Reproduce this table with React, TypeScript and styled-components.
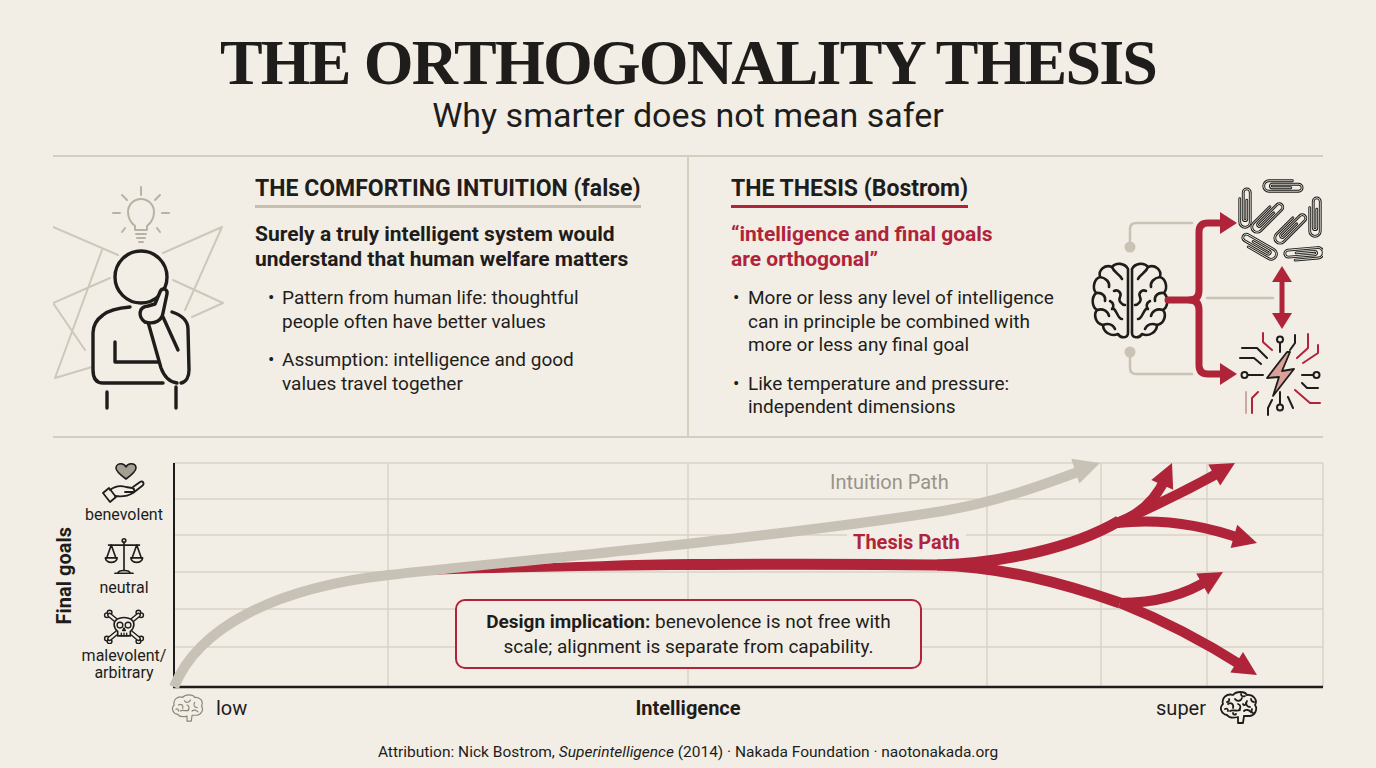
import React from 'react';
import styled, { createGlobalStyle } from 'styled-components';

const INK = '#1e1d1b';
const RED = '#b0243a';
const RULE = '#d4cdc0';
const GRID = '#dad3c6';
const BG = '#f2eee5';
const PALE = '#c9c2b5';

const GlobalStyle = createGlobalStyle`
  * { box-sizing: border-box; }
  html, body { margin: 0; padding: 0; background: ${BG}; }
  body {
    font-family: Roboto, "Liberation Sans", Arial, sans-serif;
    color: ${INK};
  }
`;

const Page = styled.div`
  width: 1376px;
  height: 768px;
  overflow: hidden;
  background: ${BG};
`;

const Header = styled.header`
  height: 155px;
  padding-top: 31px;
  text-align: center;
`;

const Title = styled.h1`
  margin: 0;
  font-family: "Liberation Serif", "Times New Roman", serif;
  font-weight: 700;
  font-size: 64px;
  line-height: 64px;
  letter-spacing: -1.8px;
`;

const Subtitle = styled.p`
  margin: 0;
  font-size: 34px;
  line-height: 40px;
`;

const TopSection = styled.section`
  margin: 0 53px;
  height: 283px;
  border-top: 2px solid ${RULE};
  border-bottom: 2px solid ${RULE};
  display: grid;
  grid-template-columns: 634px 636px;
`;

const Panel = styled.div<{ $divider?: boolean }>`
  display: flex;
  align-items: flex-start;
  border-left: ${p => (p.$divider ? `2px solid ${RULE}` : 'none')};
  padding-left: ${p => (p.$divider ? '42px' : '0')};
`;

const Figure = styled.div<{ $width: number; $top: number }>`
  width: ${p => p.$width}px;
  flex-shrink: 0;
  margin-top: ${p => p.$top}px;
  display: flex;
`;

const TextCol = styled.div<{ $width: number }>`
  width: ${p => p.$width}px;
  flex-shrink: 0;
  padding-top: 18px;
  display: flex;
  flex-direction: column;
  align-items: flex-start;
`;

const Heading = styled.h2<{ $rule: string }>`
  margin: 0;
  font-size: 23px;
  line-height: 28px;
  font-weight: 700;
  padding-bottom: 2px;
  border-bottom: 3px solid ${p => p.$rule};
`;

const Lead = styled.p<{ $color: string }>`
  margin: 14px 0 0;
  font-size: 21px;
  line-height: 25px;
  font-weight: 700;
  color: ${p => p.$color};
`;

const Bullets = styled.ul<{ $indent: number }>`
  list-style: none;
  margin: 14px 0 0;
  padding: 0 0 0 ${p => p.$indent}px;
`;

const Bullet = styled.li`
  display: flex;
  font-size: 19px;
  line-height: 23.5px;
  & + & {
    margin-top: 15px;
  }
`;

const Dot = styled.span<{ $width: number }>`
  width: ${p => p.$width}px;
  flex-shrink: 0;
`;

const ChartSection = styled.section`
  margin: 0 53px;
  padding-top: 25px;
`;

const ChartRow = styled.div`
  display: flex;
  height: 225px;
`;

const AxisTitle = styled.div`
  width: 22px;
  display: flex;
  align-items: center;
  justify-content: center;
`;

const AxisTitleText = styled.span`
  writing-mode: vertical-rl;
  transform: rotate(180deg);
  font-size: 20px;
  font-weight: 700;
  white-space: nowrap;
`;

const GoalList = styled.div`
  width: 98px;
  display: flex;
  flex-direction: column;
  justify-content: space-between;
  padding-bottom: 7px;
`;

const Goal = styled.div`
  display: flex;
  flex-direction: column;
  align-items: center;
  gap: 3px;
`;

const GoalLabel = styled.span`
  font-size: 16px;
  line-height: 17px;
  text-align: center;
`;

const Plot = styled.div`
  position: relative;
  width: 1150px;
  height: 225px;
`;

const PathLabel = styled.span<{ $x: number; $y: number; $color: string; $bold?: boolean }>`
  position: absolute;
  left: ${p => p.$x}px;
  top: ${p => p.$y}px;
  padding: 0 6px;
  font-size: 20px;
  line-height: 24px;
  font-weight: ${p => (p.$bold ? 700 : 400)};
  color: ${p => p.$color};
  background: ${BG};
`;

const Implication = styled.div`
  position: absolute;
  left: 282px;
  top: 136px;
  width: 467px;
  height: 70px;
  border: 2px solid ${RED};
  border-radius: 10px;
  background: ${BG};
  display: flex;
  align-items: center;
  justify-content: center;
  text-align: center;
  font-size: 19px;
  line-height: 25px;
`;

const AxisRow = styled.div`
  display: grid;
  grid-template-columns: 1fr auto 1fr;
  align-items: center;
  height: 40px;
`;

const AxisEnd = styled.div<{ $end?: boolean }>`
  display: flex;
  align-items: center;
  gap: 12px;
  justify-self: ${p => (p.$end ? 'end' : 'start')};
  margin: ${p => (p.$end ? '0 65px 0 0' : '0 0 0 117px')};
  font-size: 20px;
`;

const AxisName = styled.div`
  font-size: 20px;
  font-weight: 700;
`;

const Attribution = styled.p`
  margin: 14px 0 0;
  text-align: center;
  font-size: 15.5px;
  line-height: 20px;
`;

/* ---------- drawings ---------- */

const Thinker = () => (
  <svg width="200" height="278" viewBox="0 0 200 278" fill="none" strokeLinecap="round" strokeLinejoin="round">
    <path
      stroke="#cec7ba"
      strokeWidth="2"
      d="M0 70 L65 98 M169 70 L110 96 M169 70 L132 153 M49 93 L2 221 M0 146 L57 121 M0 146 L32 193 M2 221 L39 210 M120 123 L170 146 L139 160"
    />
    <g stroke="#b9b1a4" strokeWidth="2">
      <path d="M82 69 C77 65 75 60 75 55 A13 13 0 0 1 101 55 C101 60 99 65 94 69 L94 73 L82 73 Z" />
      <path d="M83 77 L93 77 M84 81 L92 81 M86 85 L90 85" />
      <path d="M88 30 L88 38 M69 38 L74 43 M107 38 L102 43 M60 56 L67 56 M109 56 L116 56 M72 71 L69 75 M104 71 L107 75" />
    </g>
    <g stroke={INK} strokeWidth="3.4">
      <circle cx="88" cy="120" r="26" fill={BG} />
      <path d="M77 150 C66 151 56 153 50 158 C43 163 40 168 40 176 L40 213 C40 221 43 226 50 226 L110 226" />
      <path d="M119 155 C128 158 135 163 135 172 L136 213 C136 220 133 225 128 226" />
      <path d="M95 165 L108 211 C111 219 116 225 124 226" />
      <path d="M110 160 L125 193" />
      <path d="M92 165 C85 160 85 150 95 149 L102 147 L107 135 C109 130 115 132 114 137 L110 156 C109 163 102 168 92 165 Z" fill={BG} />
      <path d="M62 185 L62 205 L105 205" />
      <path d="M54 235 L54 251 M123 230 L123 251" />
    </g>
  </svg>
);

const BRAIN_HALF =
  'M36 8 C33 2 24 1 20 6 C13 3 6 9 8 16 C2 18 0 27 4 32 C-1 37 0 46 5 49 C1 54 4 63 11 64 C11 71 19 76 26 73 C29 78 36 77 36 72 Z';
const BRAIN_FOLDS =
  'M20 6 C22 12 28 13 30 18 M8 16 C14 17 18 21 17 26 M4 32 C10 31 14 35 13 40 M22 30 C26 28 30 32 28 36 C26 40 30 44 33 44 M5 49 C11 47 16 50 17 55 M11 64 C16 62 21 63 23 68 M22 48 C26 52 26 58 30 58 M18 40 C22 42 22 46 20 48';

const BrainTop = ({ x, y }: { x: number; y: number }) => (
  <g transform={`translate(${x} ${y})`} stroke={INK} strokeWidth="2.6" fill="none" strokeLinecap="round" strokeLinejoin="round">
    <path d={BRAIN_HALF} />
    <path d={BRAIN_FOLDS} />
    <g transform="translate(76 0) scale(-1 1)">
      <path d={BRAIN_HALF} />
      <path d={BRAIN_FOLDS} />
    </g>
  </g>
);

const CLIP = 'M9 16 L9 40 A2.25 2.25 0 0 1 4.5 40 L4.5 6 A4.5 4.5 0 0 1 13.5 6 L13.5 44 A6.75 6.75 0 0 1 0 44 L0 14';

const Clip = ({ x, y, r }: { x: number; y: number; r: number }) => (
  <g transform={`translate(${x} ${y}) rotate(${r}) scale(0.78) translate(-6.75 -26)`} fill="none" strokeLinecap="round">
    <path d={CLIP} stroke={INK} strokeWidth="3.6" />
    <path d={CLIP} stroke={BG} strokeWidth="1.1" />
  </g>
);

const OrthogonalFigure = () => (
  <svg width="238" height="250" viewBox="1085 170 238 250" fill="none" strokeLinecap="round" strokeLinejoin="round">
    <g stroke={PALE} strokeWidth="2.5">
      <path d="M1130 247 L1130 229 Q1130 223 1136 223 L1192 223" />
      <path d="M1130 352 L1130 368 Q1130 374 1136 374 L1192 374" />
      <path d="M1207 298 L1273 298" />
    </g>
    <circle cx="1130" cy="247" r="5.5" fill={PALE} />
    <circle cx="1130" cy="352" r="5.5" fill={PALE} />
    <BrainTop x={1092} y={261} />
    <g stroke={RED} strokeWidth="7">
      <path d="M1168 300 L1192 300" />
      <path d="M1222 223 L1208 223 Q1199 223 1199 232 L1199 290 Q1199 300 1190 300 Q1199 300 1199 310 L1199 365 Q1199 374 1208 374 L1222 374" />
      <path d="M1282 280 L1282 315" strokeWidth="5" />
    </g>
    <g fill={RED}>
      <polygon points="1237,223 1220,212 1220,234" />
      <polygon points="1237,374 1220,363 1220,385" />
      <polygon points="1282,266 1272,282 1292,282" />
      <polygon points="1282,329 1272,313 1292,313" />
    </g>
    <Clip x={1283} y={186} r={90} />
    <Clip x={1245} y={208} r={0} />
    <Clip x={1267} y={217} r={45} />
    <Clip x={1290} y={228} r={45} />
    <Clip x={1315} y={217} r={0} />
    <Clip x={1259} y={247} r={-60} />
    <Clip x={1304} y={254} r={-95} />
    <g strokeWidth="2" stroke={INK}>
      <path d="M1280 343 L1280 352 M1248 375 L1263 375 M1302 375 L1313 375 M1280 392 L1280 404" />
      <path d="M1242 348 L1257 348 L1267 358 M1240 358 L1254 358 L1261 364 M1295 335 L1295 343 L1290 350 M1302 383 L1307 388 L1318 388 M1288 397 L1293 408 M1272 400 L1268 408 L1268 415" />
      <circle cx="1280" cy="339.5" r="3" fill={BG} />
      <circle cx="1244.5" cy="375" r="3" fill={BG} />
      <circle cx="1316.5" cy="375" r="3" fill={BG} />
      <circle cx="1280" cy="407.5" r="3" fill={BG} />
    </g>
    <path
      stroke={RED}
      strokeWidth="2"
      d="M1263 333 L1263 342 L1272 350 M1308 334 L1308 348 L1297 358 M1318 345 L1318 353 L1303 363 M1295 390 L1310 403 L1320 403 M1258 392 L1252 398 L1252 413"
    />
    <path stroke="#c9a9a2" strokeWidth="2" d="M1246 392 L1246 413" />
    <polygon
      points="1287,352 1267,378 1279,377 1273,396 1294,369 1282,371 1290,352"
      fill="#d9a197"
      stroke={INK}
      strokeWidth="1.8"
    />
  </svg>
);

const HeartHand = () => (
  <svg width="50" height="40" viewBox="0 0 48 40" fill="none" strokeLinecap="round" strokeLinejoin="round">
    <path
      d="M26 16 C19 11 16 8 16 5 C16 2 18.5 0.8 21 0.8 C23 0.8 25 2 26 4 C27 2 29 0.8 31 0.8 C33.5 0.8 36 2 36 5 C36 8 33 11 26 16 Z"
      fill="#a59e92"
      stroke={INK}
      strokeWidth="1.6"
    />
    <g stroke={INK} strokeWidth="1.8">
      <path d="M3 30 L9 25 L16 34 L10 39 Z" fill={BG} />
      <path d="M10 27 C15 23 20 22 26 24 L32 25 C35 25.5 35 29 32 29 L25 29" />
      <path d="M15 33 C21 34 28 33 33 30 L42 23 C45 21 43 17 40 19 L33 24" />
    </g>
  </svg>
);

const Scales = () => (
  <svg width="42" height="40" viewBox="0 0 44 44" fill="none" stroke={INK} strokeWidth="1.8" strokeLinecap="round" strokeLinejoin="round">
    <circle cx="22" cy="5" r="2" />
    <path d="M22 7 L22 38 M5 10 L39 10" />
    <path d="M8 10 L3 24 M8 10 L13 24 M36 10 L31 24 M36 10 L41 24" />
    <path d="M1.5 24 L14.5 24 A6.5 5 0 0 1 1.5 24 Z M29.5 24 L42.5 24 A6.5 5 0 0 1 29.5 24 Z" />
    <path d="M12 41 L32 41 M15 41 C16 37 28 37 29 41" />
  </svg>
);

const Skull = () => (
  <svg width="46" height="36" viewBox="0 0 48 40" fill="none" strokeLinecap="round" strokeLinejoin="round">
    <g stroke={INK} strokeWidth="1.6" fill={BG}>
      <circle cx="5" cy="8" r="2.6" />
      <circle cx="8" cy="5" r="2.6" />
      <circle cx="43" cy="8" r="2.6" />
      <circle cx="40" cy="5" r="2.6" />
      <circle cx="43" cy="34" r="2.6" />
      <circle cx="40" cy="37" r="2.6" />
      <circle cx="5" cy="34" r="2.6" />
      <circle cx="8" cy="37" r="2.6" />
    </g>
    <path d="M8 8 L40 34 M40 8 L8 34" stroke={INK} strokeWidth="5.5" />
    <path d="M8 8 L40 34 M40 8 L8 34" stroke={BG} strokeWidth="2.4" />
    <path
      d="M13 18 C13 8 35 8 35 18 C35 23 32 25 31 26 L31 31 L17 31 L17 26 C16 25 13 23 13 18 Z"
      fill={BG}
      stroke={INK}
      strokeWidth="1.8"
    />
    <g stroke={INK} strokeWidth="1.5">
      <circle cx="19.5" cy="19" r="3.2" />
      <circle cx="28.5" cy="19" r="3.2" />
      <path d="M24 22 L22.5 25 L25.5 25 Z M21 28 L21 31 M24 28 L24 31 M27 28 L27 31" />
    </g>
  </svg>
);

const BrainSide = ({ size, color, weight, dense }: { size: number; color: string; weight: number; dense?: boolean }) => (
  <svg width={size} height={size * 0.85} viewBox="0 0 40 34" fill="none" stroke={color} strokeWidth={weight} strokeLinecap="round" strokeLinejoin="round">
    <path d="M9 24 C3 23 1 16 5 13 C3 7 9 2 15 4 C18 0 27 0 29 4 C35 3 40 9 37 14 C40 18 37 25 31 25 L26 25 L25 32 L20 32 L20 26 C16 27 11 27 9 24 Z" />
    <path d="M10 13 C13 11 16 13 15 17 M17 8 C19 11 23 10 24 7 M29 10 C27 13 29 16 32 16 M12 20 C15 18 19 21 22 19 M20 13 C23 14 23 17 21 19 M26 20 C28 18 31 19 33 21 M7 18 C9 17 10 18 10 20" />
    {dense && <path d="M11 8 C12 10 10 11 9 11 M23 3 C23 5 25 6 27 5 M33 8 C33 10 35 11 36 11 M15 22 C15 24 17 24 18 23 M25 13 C26 15 28 14 28 12 M34 18 C33 20 34 22 35 22" />}
  </svg>
);

const head = (tx: number, ty: number, deg: number, len = 24, half = 12) => {
  const a = (deg * Math.PI) / 180;
  const dx = Math.cos(a);
  const dy = Math.sin(a);
  const bx = tx - dx * len;
  const by = ty - dy * len;
  return `${tx},${ty} ${bx - dy * half},${by + dx * half} ${bx + dy * half},${by - dx * half}`;
};

const H_LINES = [0, 36, 72, 109, 146, 184];
const V_LINES = [215, 515, 814, 928, 1034, 1150];

// tapering start of the thesis path, emerging from under the intuition path
const RED_TAPER = 'M215 113 C300 103 420 97 520 96 L520 107 C420 107 300 110 215 113 Z';

const RED_TRUNKS = [
  'M515 101.5 C620 101 700 101 764 102',
  'M764 102 C830 100 900 85 946 58',
  'M764 102 C830 104 890 120 947 140',
];

const RED_ARROWS = [
  { d: 'M944 60 Q978 48 993 14', tip: [999, 0], deg: -66 },
  { d: 'M944 60 Q1000 35 1049 8', tip: [1062, 0], deg: -30 },
  { d: 'M944 60 C990 55 1030 62 1069 76', tip: [1084, 80], deg: 16 },
  { d: 'M947 140 Q1000 140 1037 116', tip: [1050, 109], deg: -30 },
  { d: 'M947 140 Q1010 165 1071 204', tip: [1084, 212], deg: 32 },
];

const PathChart = () => (
  <svg width="1150" height="225" viewBox="0 0 1150 225" fill="none" style={{ overflow: 'visible', display: 'block' }}>
    <g stroke={GRID} strokeWidth="1.5">
      {H_LINES.map(y => (
        <line key={y} x1="0" y1={y} x2="1150" y2={y} />
      ))}
      {V_LINES.map(x => (
        <line key={x} x1={x} y1="0" x2={x} y2="224" />
      ))}
    </g>
    <g stroke={INK}>
      <line x1="1" y1="0" x2="1" y2="224" strokeWidth="2" />
      <line x1="0" y1="224" x2="1150" y2="224" strokeWidth="2.5" />
    </g>
    <path d={RED_TAPER} fill={RED} />
    <g stroke={RED} strokeLinecap="butt">
      {RED_TRUNKS.map(d => (
        <path key={d} d={d} strokeWidth="11" />
      ))}
      {RED_ARROWS.map(a => (
        <path key={a.d} d={a.d} strokeWidth="10" />
      ))}
    </g>
    <g fill={RED}>
      {RED_ARROWS.map(a => (
        <polygon key={a.d} points={head(a.tip[0], a.tip[1], a.deg)} />
      ))}
    </g>
    <path d="M1 224 C25 165 100 125 216 112 S600 75 770 48 C830 38 880 18 913 6" stroke="#c8c1b5" strokeWidth="10" />
    <polygon points={head(927, 0, -18, 26, 13)} fill="#c8c1b5" />
  </svg>
);

const App: React.FC = () => {
  return (
    <Page>
      <GlobalStyle />
      <Header>
        <Title>THE ORTHOGONALITY THESIS</Title>
        <Subtitle>Why smarter does not mean safer</Subtitle>
      </Header>

      <TopSection>
        <Panel>
          <Figure $width={202} $top={0}>
            <Thinker />
          </Figure>
          <TextCol $width={420}>
            <Heading $rule="#c6beb1">THE COMFORTING INTUITION (false)</Heading>
            <Lead $color={INK}>
              Surely a truly intelligent system would
              <br />
              understand that human welfare matters
            </Lead>
            <Bullets $indent={13}>
              <Bullet>
                <Dot $width={14}>•</Dot>
                <span>
                  Pattern from human life: thoughtful
                  <br />
                  people often have better values
                </span>
              </Bullet>
              <Bullet>
                <Dot $width={14}>•</Dot>
                <span>
                  Assumption: intelligence and good
                  <br />
                  values travel together
                </span>
              </Bullet>
            </Bullets>
          </TextCol>
        </Panel>

        <Panel $divider>
          <TextCol $width={354}>
            <Heading $rule={RED}>THE THESIS (Bostrom)</Heading>
            <Lead $color={RED}>
              “intelligence and final goals
              <br />
              are orthogonal”
            </Lead>
            <Bullets $indent={2}>
              <Bullet>
                <Dot $width={15}>•</Dot>
                <span>
                  More or less any level of intelligence
                  <br />
                  can in principle be combined with
                  <br />
                  more or less any final goal
                </span>
              </Bullet>
              <Bullet>
                <Dot $width={15}>•</Dot>
                <span>
                  Like temperature and pressure:
                  <br />
                  independent dimensions
                </span>
              </Bullet>
            </Bullets>
          </TextCol>
          <Figure $width={238} $top={13}>
            <OrthogonalFigure />
          </Figure>
        </Panel>
      </TopSection>

      <ChartSection>
        <ChartRow>
          <AxisTitle>
            <AxisTitleText>Final goals</AxisTitleText>
          </AxisTitle>
          <GoalList>
            <Goal>
              <HeartHand />
              <GoalLabel>benevolent</GoalLabel>
            </Goal>
            <Goal>
              <Scales />
              <GoalLabel>neutral</GoalLabel>
            </Goal>
            <Goal>
              <Skull />
              <GoalLabel>
                malevolent/
                <br />
                arbitrary
              </GoalLabel>
            </Goal>
          </GoalList>
          <Plot>
            <PathChart />
            <PathLabel $x={651} $y={7} $color="#9a9388">
              Intuition Path
            </PathLabel>
            <PathLabel $x={674} $y={67} $color={RED} $bold>
              Thesis Path
            </PathLabel>
            <Implication>
              <div>
                <b>Design implication:</b> benevolence is not free with
                <br />
                scale; alignment is separate from capability.
              </div>
            </Implication>
          </Plot>
        </ChartRow>

        <AxisRow>
          <AxisEnd>
            <BrainSide size={34} color="#8c8579" weight={1.4} />
            low
          </AxisEnd>
          <AxisName>Intelligence</AxisName>
          <AxisEnd $end>
            super
            <BrainSide size={40} color={INK} weight={1.8} dense />
          </AxisEnd>
        </AxisRow>

        <Attribution>
          Attribution: Nick Bostrom, <em>Superintelligence</em> (2014) · Nakada Foundation · naotonakada.org
        </Attribution>
      </ChartSection>
    </Page>
  );
};

export default App;
